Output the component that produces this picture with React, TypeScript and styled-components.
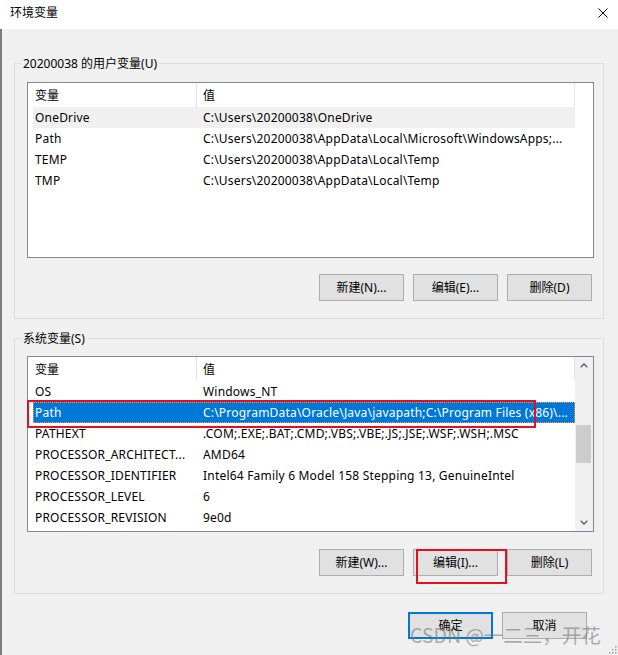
import React from "react";
import styled, { createGlobalStyle } from "styled-components";

const GlobalStyle = createGlobalStyle`
  html, body { margin: 0; padding: 0; background: #f0f0f0; overflow: hidden; }
  body {
    font-family: "Noto Sans", "Noto Sans CJK SC", sans-serif;
    font-size: 12px;
    color: #000;
  }
  * { box-sizing: border-box; }
`;

const Window = styled.div`
  position: relative;
  width: 618px;
  height: 655px;
  background: #f0f0f0;
  display: flex;
  flex-direction: column;
  overflow: hidden;
`;

const TitleBar = styled.div`
  height: 29px;
  flex-shrink: 0;
  background: #fff;
  display: flex;
  align-items: flex-start;
  justify-content: space-between;
  padding: 5px 10px 0 10px;
`;

const Title = styled.span`
  font-size: 12px;
  line-height: 16px;
`;

const CloseButton = styled.div`
  width: 10px;
  height: 10px;
  margin-top: 3px;
  display: flex;
`;

const Body = styled.div`
  flex: 1;
  border-left: 2px solid #7c7c7c;
  padding: 26px 14px 0 12px;
  display: flex;
  flex-direction: column;
`;

const Group = styled.fieldset<{ $top: number }>`
  margin: 0;
  min-width: 0;
  border: 1px solid #dcdcdc;
  padding: ${(p) => p.$top}px 9px 17px 6px;
  & + & {
    margin-top: 11px;
  }
`;

const Legend = styled.legend`
  padding: 1px 2px 0 2px;
  font-size: 12px;
  line-height: 16px;
`;

const ListView = styled.div`
  margin-left: 6px;
  height: 176px;
  border: 1px solid #828790;
  background: #fff;
  display: flex;
`;

const ListMain = styled.div`
  flex: 1;
  min-width: 0;
  display: flex;
  flex-direction: column;
`;

const Header = styled.div`
  display: flex;
  height: 24px;
  flex-shrink: 0;
`;

const HeaderCell = styled.div<{ $first?: boolean }>`
  ${(p) => (p.$first ? "width: 169px; padding-left: 7px;" : "flex: 1; padding-left: 6px;")}
  border-right: 1px solid #e5e5e5;
  line-height: 25px;
  white-space: nowrap;
`;

const Row = styled.div<{ $state?: "hover" | "selected" }>`
  position: relative;
  display: flex;
  height: 21px;
  margin-left: 5px;
  padding-top: 1px;
  line-height: 20px;
  letter-spacing: 0.2px;
  white-space: nowrap;
  background: ${(p) =>
    p.$state === "selected" ? "#0078d7" : p.$state === "hover" ? "#f0f0f0" : "transparent"};
  color: ${(p) => (p.$state === "selected" ? "#fff" : "#000")};
  outline: ${(p) => (p.$state === "selected" ? "1px dotted #ff9a3c" : "none")};
  outline-offset: -1px;
`;

const NameCell = styled.div`
  width: 168px;
  flex-shrink: 0;
  padding-left: 2px;
  overflow: hidden;
`;

const ValueCell = styled.div`
  flex: 1;
  min-width: 0;
  padding-left: 2px;
  overflow: hidden;
`;

const Side = styled.div<{ $scroll?: boolean }>`
  width: 18px;
  flex-shrink: 0;
  background: ${(p) => (p.$scroll ? "#f0f0f0" : "#fff")};
  display: flex;
  flex-direction: column;
`;

const ScrollArrow = styled.div`
  height: 17px;
  flex-shrink: 0;
  display: flex;
  align-items: center;
  justify-content: center;
  padding-right: 1px;
`;

const ScrollTrack = styled.div`
  flex: 1;
  padding-top: 51px;
`;

const Thumb = styled.div`
  height: 38px;
  margin: 0 2px 0 1px;
  background: #cdcdcd;
`;

const ButtonRow = styled.div<{ $gap: number }>`
  display: flex;
  justify-content: flex-end;
  gap: 9px;
  margin-top: ${(p) => p.$gap}px;
  padding-right: 2px;
`;

const Button = styled.button<{ $primary?: boolean }>`
  position: relative;
  width: 85px;
  height: 27px;
  padding: 0;
  background: #e1e1e1;
  border: ${(p) => (p.$primary ? "2px solid #0078d7" : "1px solid #adadad")};
  font-family: inherit;
  font-size: 12px;
  color: #000;
  line-height: 16px;
`;

const DialogRow = styled.div`
  display: flex;
  justify-content: flex-end;
  gap: 9px;
  margin-top: 18px;
  padding-right: 17px;
`;

const RowHighlight = styled.div`
  position: absolute;
  left: -6px;
  top: -2px;
  width: 509px;
  height: 28px;
  border: 2px solid #e5101f;
  pointer-events: none;
`;

const ButtonHighlight = styled.div`
  position: absolute;
  left: 2px;
  top: -1px;
  width: 91px;
  height: 35px;
  border: 2px solid #e5101f;
  pointer-events: none;
`;

const Watermark = styled.div`
  position: absolute;
  left: 410px;
  top: 622px;
  font-family: "Noto Sans CJK SC", sans-serif;
  font-size: 19.5px;
  line-height: 26px;
  color: rgba(120, 120, 120, 0.6);
  white-space: nowrap;
  pointer-events: none;
`;

const Grip = styled.div`
  position: absolute;
  right: 1px;
  bottom: 1px;
  width: 9px;
  height: 9px;
  display: flex;
`;

type Item = { name: string; value: string; state?: "hover" | "selected"; mark?: boolean };

const userVars: Item[] = [
  { name: "OneDrive", value: "C:\\Users\\20200038\\OneDrive", state: "hover" },
  { name: "Path", value: "C:\\Users\\20200038\\AppData\\Local\\Microsoft\\WindowsApps;..." },
  { name: "TEMP", value: "C:\\Users\\20200038\\AppData\\Local\\Temp" },
  { name: "TMP", value: "C:\\Users\\20200038\\AppData\\Local\\Temp" },
];

const sysVars: Item[] = [
  { name: "OS", value: "Windows_NT" },
  {
    name: "Path",
    value: "C:\\ProgramData\\Oracle\\Java\\javapath;C:\\Program Files (x86)\\...",
    state: "selected",
    mark: true,
  },
  { name: "PATHEXT", value: ".COM;.EXE;.BAT;.CMD;.VBS;.VBE;.JS;.JSE;.WSF;.WSH;.MSC" },
  { name: "PROCESSOR_ARCHITECT...", value: "AMD64" },
  { name: "PROCESSOR_IDENTIFIER", value: "Intel64 Family 6 Model 158 Stepping 13, GenuineIntel" },
  { name: "PROCESSOR_LEVEL", value: "6" },
  { name: "PROCESSOR_REVISION", value: "9e0d" },
];

const Chevron = ({ up }: { up?: boolean }) => (
  <svg width="8" height="5" viewBox="0 0 8 5">
    <polyline
      points={up ? "0.7,4.3 4,1 7.3,4.3" : "0.7,0.7 4,4 7.3,0.7"}
      fill="none"
      stroke="#606060"
      strokeWidth="1.4"
    />
  </svg>
);

const VarList = ({ items, scroll }: { items: Item[]; scroll?: boolean }) => (
  <ListView>
    <ListMain>
      <Header>
        <HeaderCell $first>变量</HeaderCell>
        <HeaderCell>值</HeaderCell>
      </Header>
      {items.map((it) => (
        <Row key={it.name} $state={it.state}>
          <NameCell>{it.name}</NameCell>
          <ValueCell>{it.value}</ValueCell>
          {it.mark && <RowHighlight />}
        </Row>
      ))}
    </ListMain>
    <Side $scroll={scroll}>
      {scroll && (
        <>
          <ScrollArrow>
            <Chevron up />
          </ScrollArrow>
          <ScrollTrack>
            <Thumb />
          </ScrollTrack>
          <ScrollArrow>
            <Chevron />
          </ScrollArrow>
        </>
      )}
    </Side>
  </ListView>
);

export default function App() {
  return (
    <>
      <GlobalStyle />
      <Window>
        <TitleBar>
          <Title>环境变量</Title>
          <CloseButton>
            <svg width="10" height="10" viewBox="0 0 10 10">
              <path d="M0.5 0.5 L9.5 9.5 M9.5 0.5 L0.5 9.5" stroke="#000" strokeWidth="1" />
            </svg>
          </CloseButton>
        </TitleBar>
        <Body>
          <Group $top={10}>
            <Legend>20200038 的用户变量(U)</Legend>
            <VarList items={userVars} />
            <ButtonRow $gap={16}>
              <Button>新建(N)...</Button>
              <Button>编辑(E)...</Button>
              <Button>删除(D)</Button>
            </ButtonRow>
          </Group>
          <Group $top={9}>
            <Legend>系统变量(S)</Legend>
            <VarList items={sysVars} scroll />
            <ButtonRow $gap={17}>
              <Button>新建(W)...</Button>
              <Button>
                编辑(I)...
                <ButtonHighlight />
              </Button>
              <Button>删除(L)</Button>
            </ButtonRow>
          </Group>
          <DialogRow>
            <Button $primary>确定</Button>
            <Button>取消</Button>
          </DialogRow>
        </Body>
        <Watermark>CSDN @一二三，开花</Watermark>
        <Grip>
          <svg width="9" height="9" viewBox="0 0 9 9">
            {[
              [7, 1],
              [7, 4],
              [4, 4],
              [7, 7],
              [4, 7],
              [1, 7],
            ].map(([x, y]) => (
              <rect key={`${x}-${y}`} x={x} y={y} width="1.5" height="1.5" fill="#a0a0a0" />
            ))}
          </svg>
        </Grip>
      </Window>
    </>
  );
}
